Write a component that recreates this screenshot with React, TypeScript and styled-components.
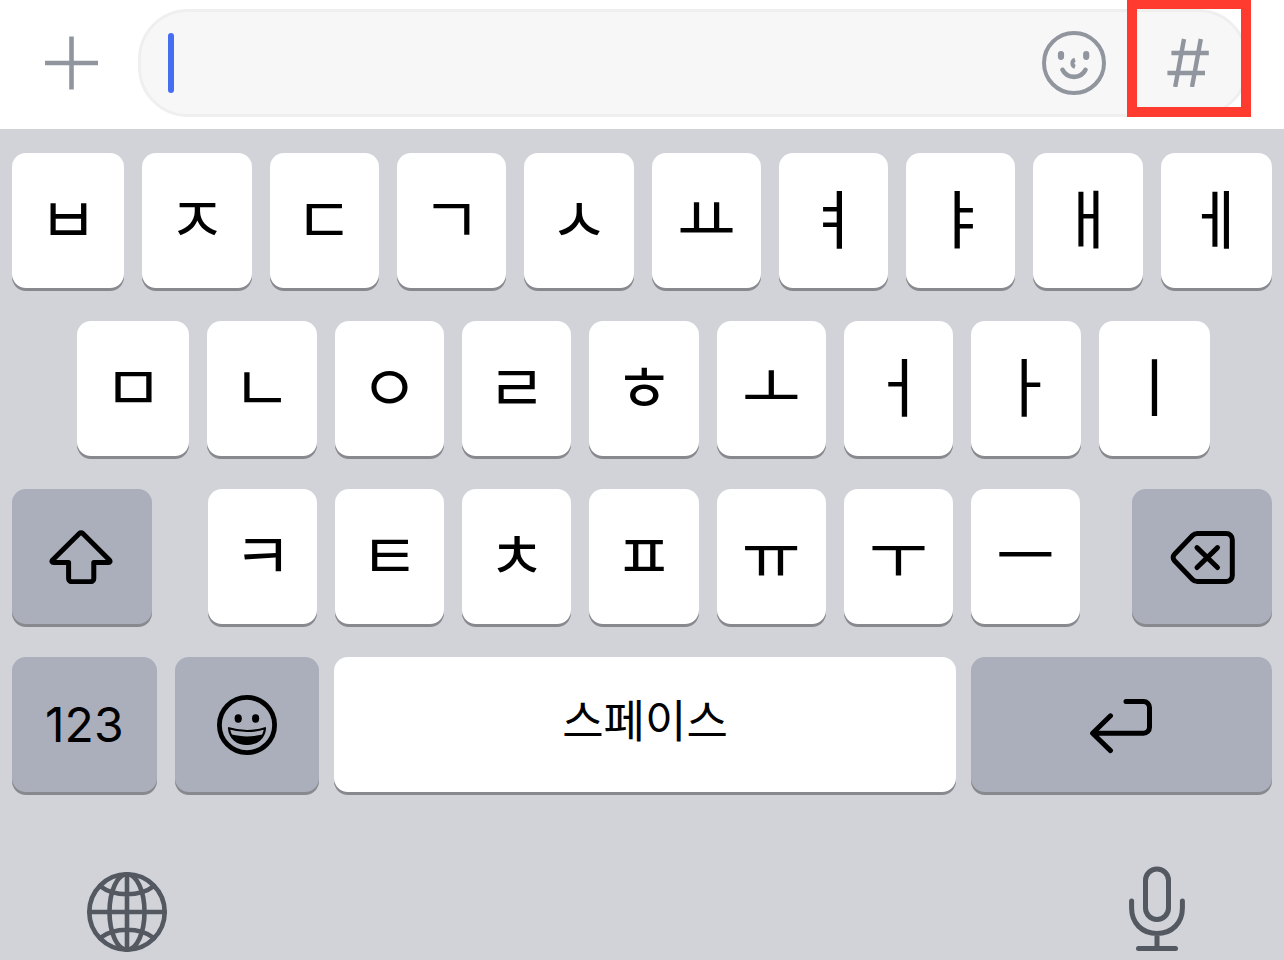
import React from "react";
import styled, { createGlobalStyle, css } from "styled-components";

const GlobalStyle = createGlobalStyle`
  * { box-sizing: border-box; }
  body { margin: 0; background: #d1d3d9; }
  button, input { font: inherit; color: inherit; border: 0; padding: 0; margin: 0; }
  svg { display: block; }
`;

const Page = styled.main`
  display: flex;
  flex-direction: column;
  min-height: 100vh;
  background: #d1d3d9;
  color: #000;
  font-family: Inter, "Noto Sans CJK KR", sans-serif;
`;

const InputBar = styled.header`
  display: flex;
  align-items: center;
  padding: 9px 36px 12px 45px;
  background: #fff;
  color: #90959e;
`;

const IconButton = styled.button`
  flex: none;
  background: none;
  cursor: pointer;
`;

const Field = styled.div`
  flex: 1;
  display: flex;
  align-items: center;
  height: 108px;
  margin-left: 40px;
  padding: 0 36px 0 27px;
  border: 3px solid #efeff0;
  border-radius: 50px;
  background: #f7f7f8;
`;

const Caret = styled.span`
  flex: none;
  width: 6px;
  height: 60px;
  border-radius: 3px;
  background: #466ef0;
`;

const MessageInput = styled.input`
  flex: 1;
  min-width: 0;
  height: 100%;
  background: none;
  outline: none;
  color: #000;
  caret-color: transparent;
  font-size: 48px;
`;

const HashSlot = styled.div`
  position: relative;
  margin-left: 61px;
`;

const Highlight = styled.span`
  position: absolute;
  top: -36px;
  left: -40px;
  width: 124px;
  height: 118px;
  border: 10px solid #ff3b30;
  pointer-events: none;
`;

const Keyboard = styled.section`
  display: flex;
  flex-direction: column;
  gap: 33px;
  padding: 24px 12px 0;
`;

const Row = styled.div<{ $inset?: boolean }>`
  display: flex;
  gap: 18px;
  ${(p) => p.$inset && css`padding: 0 62px 0 65px;`}
`;

const ShiftRow = styled.div`
  display: flex;
`;

const LetterGroup = styled.div`
  flex: 872 1 0;
  display: flex;
  gap: 18px;
  margin: 0 52px 0 56px;
`;

const BottomRow = styled.div`
  display: flex;
  gap: 15px;
`;

const ModeGroup = styled.div`
  flex: 307 1 0;
  display: flex;
  gap: 18px;
`;

const Key = styled.button<{ $grow?: number; $tone?: "light" | "dark"; $label?: "jamo" | "word" }>`
  flex: ${(p) => p.$grow ?? 109} 1 0;
  min-width: 0;
  display: flex;
  align-items: center;
  justify-content: center;
  height: 135px;
  border-radius: 14px;
  background: ${(p) => (p.$tone === "dark" ? "#abafbb" : "#fff")};
  box-shadow: 0 3px 0 #88898e;
  font-size: ${(p) => (p.$label === "jamo" ? 64 : p.$label === "word" ? 45 : 48)}px;
  line-height: 72px;
  font-family: ${(p) => (p.$label ? '"Noto Sans CJK KR", sans-serif' : "inherit")};
  ${(p) => p.$label && css`padding-bottom: 12px;`}
  cursor: pointer;
`;

const SystemRow = styled.footer`
  display: flex;
  justify-content: space-between;
  align-items: flex-end;
  padding: 74px 99px 8px 87px;
  color: #535861;
`;

const TOP = ["ㅂ", "ㅈ", "ㄷ", "ㄱ", "ㅅ", "ㅛ", "ㅕ", "ㅑ", "ㅐ", "ㅔ"];
const HOME = ["ㅁ", "ㄴ", "ㅇ", "ㄹ", "ㅎ", "ㅗ", "ㅓ", "ㅏ", "ㅣ"];
const LOWER = ["ㅋ", "ㅌ", "ㅊ", "ㅍ", "ㅠ", "ㅜ", "ㅡ"];

const edgeGrow = (i: number, n: number) => (i === 0 ? 112 : i === n - 1 ? 111 : 109);

const stroke = {
  fill: "none",
  stroke: "currentColor",
  strokeLinecap: "round" as const,
  strokeLinejoin: "round" as const,
  "aria-hidden": true,
};

const PlusIcon = () => (
  <svg width="53" height="54" viewBox="0 0 53 54" {...stroke} strokeLinecap="butt" strokeWidth="4.6">
    <path d="M0 27h53M26.500 .5v53" />
  </svg>
);

const SmileIcon = () => (
  <svg width="64" height="64" viewBox="0 0 64 64" {...stroke}>
    <circle cx="32" cy="32" r="30" strokeWidth="4" />
    <path d="M19 23.200v2.600M44.200 23.200v2.600" strokeWidth="6.200" />
    <path d="M33 28.600A3.800 3.800 0 0 0 33 35.800" strokeWidth="4" strokeLinecap="butt" />
    <path d="M20.500 38.800c4.600 9.400 18.400 9.400 23 0" strokeWidth="4.600" />
  </svg>
);

const HashIcon = () => (
  <svg width="42" height="52" viewBox="0 0 42 52" {...stroke} strokeLinecap="butt" strokeWidth="4.400">
    <path d="M17 4L8.200 52M33.800 4L25 52" />
    <path d="M4.400 18H41.800M.4 38H38" />
  </svg>
);

const ShiftIcon = () => (
  <svg width="66" height="54" viewBox="0 0 66 54" {...stroke} strokeWidth="5">
    <path d="M30.600 3.300L3.600 30c-1.200 1.300-.6 2.400 1 2.400H19.600V48.500a3.200 3.200 0 0 0 3.200 3.200H41.600a3.200 3.200 0 0 0 3.200-3.200V32.400H59.400c1.600 0 2.200-1.100 1-2.400L33.600 3.300a2.100 2.100 0 0 0-3 0Z" />
  </svg>
);

const BackspaceIcon = () => (
  <svg width="66" height="56" viewBox="-1 -1 66 56" {...stroke} strokeWidth="5">
    <path d="M27.500 3.400H56.300a6 6 0 0 1 6 6V45.600a6 6 0 0 1-6 6H27.500a7 7 0 0 1-5-2.100L4.500 30.800a4.600 4.600 0 0 1 0-6.500L22.500 5.500a7 7 0 0 1 5-2.100Z" />
    <path d="M27 17.600L47.500 37.500M47.500 17.600L27 37.500" />
  </svg>
);

const GrinIcon = () => (
  <svg width="60" height="60" viewBox="0 0 60 60" {...stroke}>
    <circle cx="30" cy="30" r="27.600" strokeWidth="4.800" />
    <ellipse cx="21.200" cy="23.500" rx="3.600" ry="4.200" fill="currentColor" stroke="none" />
    <ellipse cx="38.600" cy="23.500" rx="3.600" ry="4.200" fill="currentColor" stroke="none" />
    <path d="M12 33.200c11.600 3.600 24.400 3.600 36 0c-.8 10.200-8.400 15.800-18 15.800S12.800 43.400 12 33.200Z" strokeWidth="2.200" />
    <path d="M14.600 39.600c10 2.400 20.800 2.400 30.800 0c-2.800 6.600-8.600 9.900-15.400 9.900s-12.600-3.300-15.400-9.900Z" fill="currentColor" stroke="none" />
  </svg>
);

const ReturnIcon = () => (
  <svg width="64" height="58" viewBox="0 -2 64 58" {...stroke} strokeWidth="5">
    <path d="M37 3.400H54.500a6 6 0 0 1 6 6V29.300a6 6 0 0 1-6 6H4M21.500 17.800L3.600 35.300L21.500 52.600" />
  </svg>
);

const GlobeIcon = () => (
  <svg width="80" height="80" viewBox="0 0 80 80" {...stroke} strokeWidth="4.600">
    <circle cx="40" cy="40" r="37.700" />
    <ellipse cx="40" cy="40" rx="17.500" ry="37.700" />
    <path d="M40 2.300v75.400M2.300 40h75.400M13 14c14 11 40 11 54 0M13 66c14-11 40-11 54 0" />
  </svg>
);

const MicIcon = () => (
  <svg width="56" height="86" viewBox="0 0 56 86" {...stroke} strokeWidth="5">
    <rect x="16.500" y="3" width="23" height="50.500" rx="11.500" />
    <path d="M2.600 35V42c0 15 10.400 25.500 25.400 25.500S53.400 57 53.400 42V35M28 67.500V82.500M9.500 82.500H46.500" />
  </svg>
);

const Letter = ({ char, grow }: { char: string; grow?: number }) => (
  <Key type="button" $label="jamo" $grow={grow}>
    {char}
  </Key>
);

export default function App() {
  return (
    <Page lang="ko">
      <GlobalStyle />
      <InputBar>
        <IconButton type="button" aria-label="추가">
          <PlusIcon />
        </IconButton>
        <Field>
          <Caret />
          <MessageInput type="text" aria-label="메시지" />
          <IconButton type="button" aria-label="이모티콘">
            <SmileIcon />
          </IconButton>
          <HashSlot>
            <IconButton type="button" aria-label="샵 검색">
              <HashIcon />
            </IconButton>
            <Highlight />
          </HashSlot>
        </Field>
      </InputBar>
      <Keyboard aria-label="키보드">
        <Row>
          {TOP.map((c, i) => (
            <Letter key={c} char={c} grow={edgeGrow(i, TOP.length)} />
          ))}
        </Row>
        <Row $inset>
          {HOME.map((c, i) => (
            <Letter key={c} char={c} grow={edgeGrow(i, HOME.length)} />
          ))}
        </Row>
        <ShiftRow>
          <Key type="button" $tone="dark" $grow={140} aria-label="시프트">
            <ShiftIcon />
          </Key>
          <LetterGroup>
            {LOWER.map((c) => (
              <Letter key={c} char={c} />
            ))}
          </LetterGroup>
          <Key type="button" $tone="dark" $grow={140} aria-label="지우기">
            <BackspaceIcon />
          </Key>
        </ShiftRow>
        <BottomRow>
          <ModeGroup>
            <Key type="button" $tone="dark">
              123
            </Key>
            <Key type="button" $tone="dark" aria-label="이모지">
              <GrinIcon />
            </Key>
          </ModeGroup>
          <Key type="button" $label="word" $grow={621}>
            스페이스
          </Key>
          <Key type="button" $tone="dark" $grow={301} aria-label="줄바꿈">
            <ReturnIcon />
          </Key>
        </BottomRow>
      </Keyboard>
      <SystemRow>
        <IconButton type="button" aria-label="언어 변경">
          <GlobeIcon />
        </IconButton>
        <IconButton type="button" aria-label="받아쓰기">
          <MicIcon />
        </IconButton>
      </SystemRow>
    </Page>
  );
}
